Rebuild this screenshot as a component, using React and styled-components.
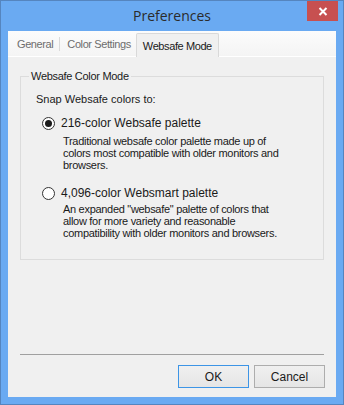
import React from "react";
import styled, { createGlobalStyle } from "styled-components";

const GlobalStyle = createGlobalStyle`
  html, body {
    margin: 0;
    padding: 0;
    background: #ffffff;
  }
  * {
    box-sizing: border-box;
  }
`;

const Window = styled.div`
  width: 344px;
  height: 405px;
  display: flex;
  flex-direction: column;
  background: #6aaaf2;
  border: 1px solid #5585bf;
  font-family: "Liberation Sans", Arial, sans-serif;
`;

const TitleBar = styled.div`
  height: 30px;
  display: grid;
  grid-template-columns: 1fr auto 1fr;
  align-items: start;
`;

const Title = styled.div`
  grid-column: 2;
  padding-top: 5px;
  font-family: "Open Sans", "Noto Sans", sans-serif;
  font-size: 14px;
  color: #2b2b2b;
`;

const CloseButton = styled.button`
  grid-column: 3;
  justify-self: end;
  width: 31px;
  height: 20px;
  margin-right: 5px;
  border: 0;
  padding: 0;
  background: #c75050;
  display: flex;
  align-items: center;
  justify-content: center;
`;

const Client = styled.div`
  flex: 1;
  margin: 0 7px 7px 7px;
  background: #f0f0f0;
  display: flex;
  flex-direction: column;
`;

const TabStrip = styled.div`
  height: 26px;
  display: flex;
  align-items: flex-end;
  padding-left: 4px;
  background: linear-gradient(#fcfcfc, #f4f4f4);
  border-bottom: 1px solid #ffffff;
`;

const Tab = styled.div`
  height: ${p => (p.$active ? "24px" : "22px")};
  display: flex;
  align-items: center;
  padding: ${p => (p.$active ? "0 6px" : "0 5px")};
  margin-bottom: ${p => (p.$active ? "-1px" : "1px")};
  font-size: 11px;
  letter-spacing: -0.4px;
  color: ${p => (p.$active ? "#1a1a1a" : "#6d6d6d")};
  background: ${p => (p.$active ? "#f0f0f0" : "transparent")};
  border: ${p => (p.$active ? "1px solid #d9d9d9" : "0")};
  border-bottom: 0;
  border-radius: 2px 2px 0 0;
`;

const TabDivider = styled.span`
  width: 1px;
  height: 14px;
  margin: 0 2px 5px 1px;
  background: #dadada;
`;

const Panel = styled.div`
  flex: 1;
  display: flex;
  flex-direction: column;
  padding: 13px 12px 9px 12px;
`;

const GroupBox = styled.fieldset`
  margin: 0;
  height: 190px;
  width: 304px;
  padding: 0 0 0 15px;
  border: 1px solid #dcdcdc;
  font-size: 11px;
  color: #1a1a1a;
`;

const Legend = styled.legend`
  margin-left: -7px;
  padding: 0 2px;
  font-size: 11px;
  letter-spacing: -0.3px;
  color: #1a1a1a;
`;

const Prompt = styled.div`
  margin-top: 11px;
  line-height: 13px;
`;

const Option = styled.div`
  display: flex;
  flex-direction: column;
  margin-top: ${p => p.$gap}px;
`;

const OptionRow = styled.label`
  display: flex;
  align-items: center;
  gap: 6px;
  margin-left: 6px;
  font-size: 12px;
  line-height: 14px;
`;

const Radio = styled.span`
  width: 13px;
  height: 13px;
  border-radius: 50%;
  border: 1px solid #333333;
  background: #ffffff;
  display: flex;
  align-items: center;
  justify-content: center;
  &::after {
    content: "";
    width: 7px;
    height: 7px;
    border-radius: 50%;
    background: ${p => (p.$checked ? "#1b1b1b" : "transparent")};
  }
`;

const Description = styled.p`
  margin: ${p => p.$top}px 0 0 27px;
  width: 220px;
  line-height: 12px;
  letter-spacing: -0.3px;
  color: #1a1a1a;
`;

const Footer = styled.div`
  margin-top: auto;
  display: flex;
  flex-direction: column;
`;

const Separator = styled.div`
  height: 1px;
  width: 304px;
  background: #a0a0a0;
`;

const ButtonRow = styled.div`
  display: flex;
  justify-content: flex-end;
  gap: 5px;
  margin-top: 10px;
  margin-right: -1px;
`;

const Button = styled.button`
  width: 71px;
  height: 23px;
  padding: 0;
  font-family: "Liberation Sans", Arial, sans-serif;
  font-size: 12px;
  color: #1a1a1a;
  background: linear-gradient(#f0f0f0, #e5e5e5);
  border: 1px solid ${p => (p.$primary ? "#3d95e6" : "#adadad")};
`;

export default function App() {
  return (
    <>
      <GlobalStyle />
      <Window>
        <TitleBar>
          <Title>Preferences</Title>
          <CloseButton aria-label="Close">
            <svg width="10" height="9" viewBox="0 0 10 9">
              <path d="M1.5 1 L8.5 8 M8.5 1 L1.5 8" stroke="#ffffff" strokeWidth="2" />
            </svg>
          </CloseButton>
        </TitleBar>
        <Client>
          <TabStrip>
            <Tab>General</Tab>
            <TabDivider />
            <Tab>Color Settings</Tab>
            <Tab $active>Websafe Mode</Tab>
          </TabStrip>
          <Panel>
            <GroupBox>
              <Legend>Websafe Color Mode</Legend>
              <Prompt>Snap Websafe colors to:</Prompt>
              <Option $gap={10}>
                <OptionRow>
                  <Radio $checked />
                  216-color Websafe palette
                </OptionRow>
                <Description $top={5}>
                  Traditional websafe color palette made up of colors most compatible with older monitors and browsers.
                </Description>
              </Option>
              <Option $gap={15}>
                <OptionRow>
                  <Radio />
                  4,096-color Websmart palette
                </OptionRow>
                <Description $top={3}>
                  An expanded "websafe" palette of colors that allow for more variety and reasonable compatibility with older monitors and browsers.
                </Description>
              </Option>
            </GroupBox>
            <Footer>
              <Separator />
              <ButtonRow>
                <Button $primary>OK</Button>
                <Button>Cancel</Button>
              </ButtonRow>
            </Footer>
          </Panel>
        </Client>
      </Window>
    </>
  );
}
